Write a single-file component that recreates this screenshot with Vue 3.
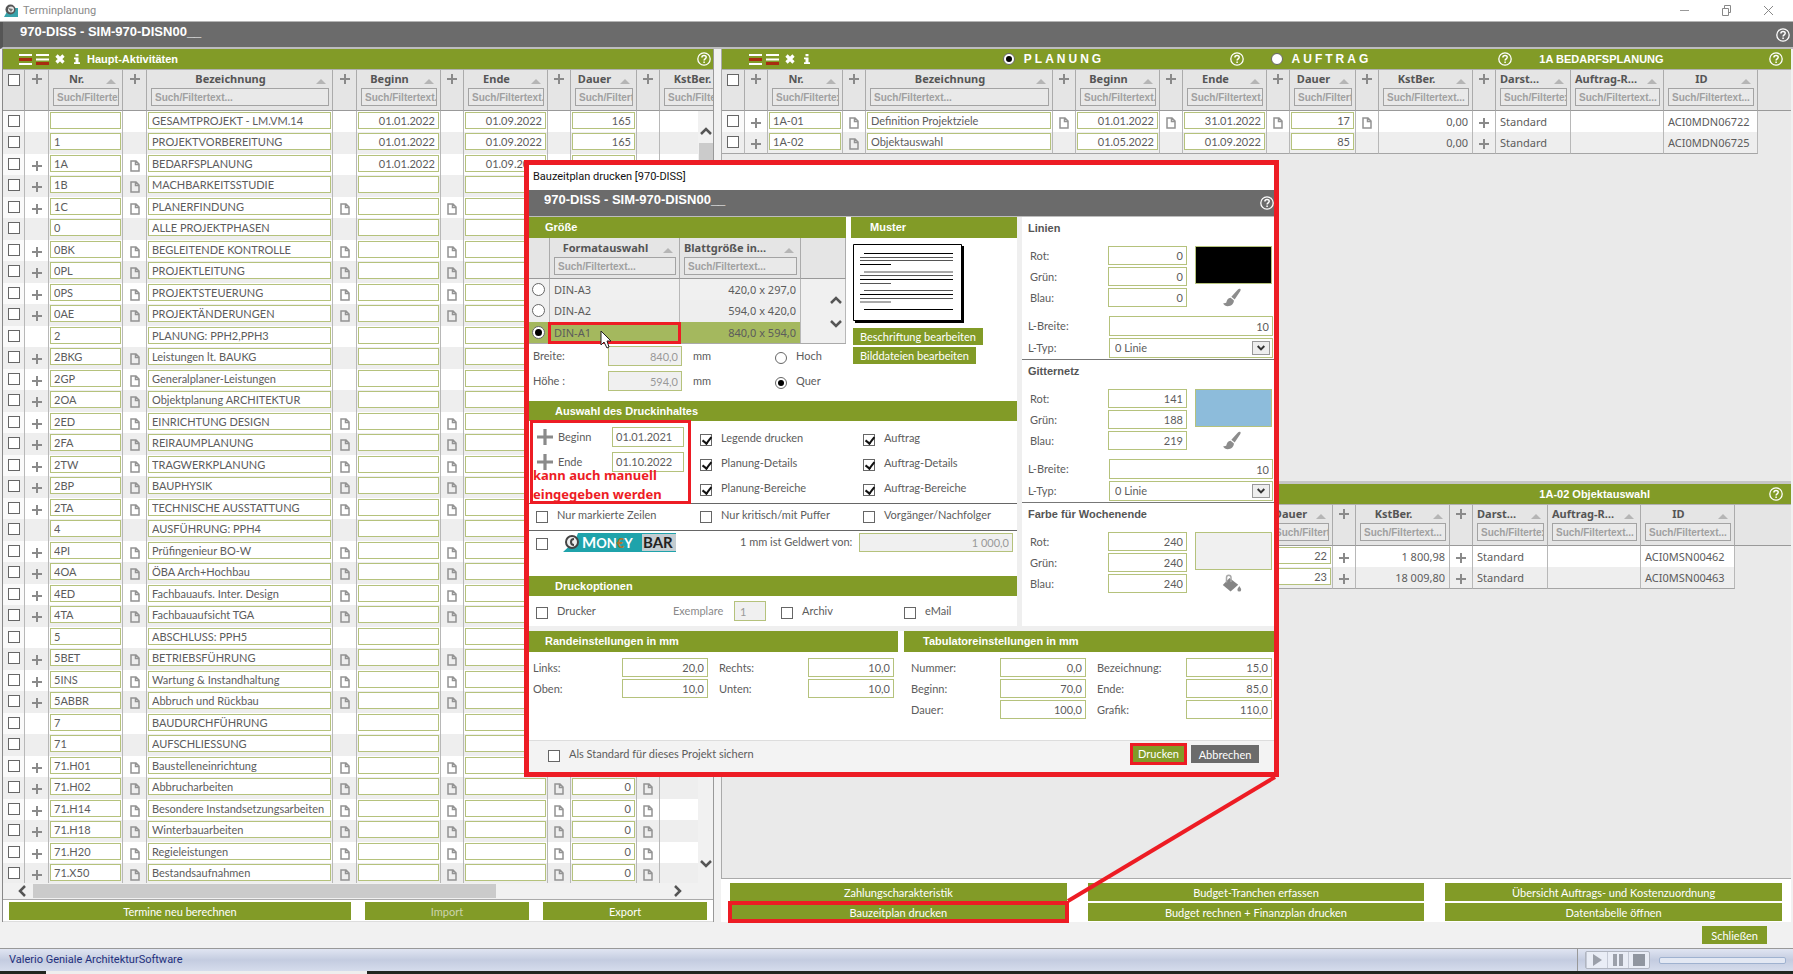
<script setup>
import { ref } from 'vue'

const r = (nr, name, icons = 2, start = '', end = '', days = '') => ({ nr, name, icons, start, end, days })

// icons: 0 = none, 1 = plus and note at the number only, 2 = notes in every column
const activities = ref([
  r('', 'GESAMTPROJEKT - LM.VM.14', 0, '01.01.2022', '01.09.2022', '165'),
  r('1', 'PROJEKTVORBEREITUNG', 0, '01.01.2022', '01.09.2022', '165'),
  r('1A', 'BEDARFSPLANUNG', 1, '01.01.2022', '01.09.2022', '165'),
  r('1B', 'MACHBARKEITSSTUDIE', 1),
  r('1C', 'PLANERFINDUNG'),
  r('0', 'ALLE PROJEKTPHASEN', 0),
  r('0BK', 'BEGLEITENDE KONTROLLE'),
  r('0PL', 'PROJEKTLEITUNG'),
  r('0PS', 'PROJEKTSTEUERUNG'),
  r('0AE', 'PROJEKTÄNDERUNGEN'),
  r('2', 'PLANUNG: PPH2,PPH3', 0),
  r('2BKG', 'Leistungen lt. BAUKG', 1),
  r('2GP', 'Generalplaner-Leistungen', 1),
  r('2OA', 'Objektplanung ARCHITEKTUR', 1),
  r('2ED', 'EINRICHTUNG DESIGN'),
  r('2FA', 'REIRAUMPLANUNG'),
  r('2TW', 'TRAGWERKPLANUNG'),
  r('2BP', 'BAUPHYSIK'),
  r('2TA', 'TECHNISCHE AUSSTATTUNG'),
  r('4', 'AUSFÜHRUNG: PPH4', 0),
  r('4PI', 'Prüfingenieur BO-W'),
  r('4OA', 'ÖBA Arch+Hochbau'),
  r('4ED', 'Fachbauaufs. Inter. Design'),
  r('4TA', 'Fachbauaufsicht TGA'),
  r('5', 'ABSCHLUSS: PPH5', 0),
  r('5BET', 'BETRIEBSFÜHRUNG'),
  r('5INS', 'Wartung & Instandhaltung'),
  r('5ABBR', 'Abbruch und Rückbau'),
  r('7', 'BAUDURCHFÜHRUNG', 0),
  r('71', 'AUFSCHLIESSUNG', 0),
  r('71.H01', 'Baustelleneinrichtung', 2, '', '', '0'),
  r('71.H02', 'Abbrucharbeiten', 2, '', '', '0'),
  r('71.H14', 'Besondere Instandsetzungsarbeiten', 2, '', '', '0'),
  r('71.H18', 'Winterbauarbeiten', 2, '', '', '0'),
  r('71.H20', 'Regieleistungen', 2, '', '', '0'),
  r('71.X50', 'Bestandsaufnahmen', 2, '', '', '0'),
])

const leftCols = [
  { t: 'check', w: 22 }, { t: 'icon', w: 24 },
  { t: 'field', k: 'nr', label: 'Nr.', w: 74 }, { t: 'icon', w: 24 },
  { t: 'field', k: 'name', label: 'Bezeichnung', w: 186 }, { t: 'icon', w: 24 },
  { t: 'field', k: 'start', label: 'Beginn', w: 84, num: true }, { t: 'icon', w: 23 },
  { t: 'field', k: 'end', label: 'Ende', w: 84, num: true }, { t: 'icon', w: 23 },
  { t: 'field', k: 'days', label: 'Dauer', w: 66, num: true }, { t: 'icon', w: 23 },
  { t: 'text', k: 'cost', label: 'KstBer.', w: 84, num: true },
]

const head = [
  { t: 'check', w: 23 }, { t: 'icon', w: 23 },
  { t: 'field', k: 'nr', label: 'Nr.', w: 75 }, { t: 'icon', w: 23 },
  { t: 'field', k: 'name', label: 'Bezeichnung', w: 187 }, { t: 'icon', w: 23 },
  { t: 'field', k: 'start', label: 'Beginn', w: 84, num: true }, { t: 'icon', w: 23 },
  { t: 'field', k: 'end', label: 'Ende', w: 84, num: true },
]
const tail = [
  { t: 'field', k: 'days', label: 'Dauer', w: 66, num: true }, { t: 'icon', w: 23 },
  { t: 'text', k: 'cost', label: 'KstBer.', w: 94, num: true }, { t: 'icon', w: 23 },
  { t: 'text', k: 'view', label: 'Darst…', w: 75, start: true },
  { t: 'text', k: 'order', label: 'Auftrag-R…', w: 93, start: true },
  { t: 'text', k: 'id', label: 'ID', w: 94 },
]
const planCols = [...head, { t: 'icon', w: 23 }, ...tail]
const orderCols = [...head, ...tail]

const planRows = ref([
  { nr: '1A-01', name: 'Definition Projektziele', start: '01.01.2022', end: '31.01.2022', days: '17', cost: '0,00', view: 'Standard', id: 'ACI0MDN06722', marks: ['plus', 'doc', 'doc', 'doc', 'doc', 'doc', 'plus'] },
  { nr: '1A-02', name: 'Objektauswahl', start: '01.05.2022', end: '01.09.2022', days: '85', cost: '0,00', view: 'Standard', id: 'ACI0MDN06725', marks: ['plus', 'doc', '', '', '', '', 'plus'] },
])
const orderRows = ref([
  { nr: '', name: '', start: '', end: '', days: '22', cost: '1 800,98', view: 'Standard', id: 'ACI0MSN00462', marks: ['plus', 'doc', '', '', 'plus', 'plus'] },
  { nr: '', name: '', start: '', end: '', days: '23', cost: '18 009,80', view: 'Standard', id: 'ACI0MSN00463', marks: ['plus', 'doc', '', '', 'plus', 'plus'] },
])
activities.value.forEach((a) => {
  a.marks = a.icons === 2 ? ['plus', 'doc', 'doc', 'doc', 'doc', 'doc'] : a.icons === 1 ? ['plus', 'doc'] : []
})

const slot = (cols, i) => cols.slice(0, i).filter((c) => c.t === 'icon').length

const grids = {
  left: { cols: leftCols, rows: activities.value },
  plan: { cols: planCols, rows: planRows.value },
  order: { cols: orderCols, rows: orderRows.value },
}

const mode = ref('planung')
const format = ref('DIN-A1')
const orientation = ref('quer')
const formats = [
  { name: 'DIN-A3', size: '420,0 x 297,0' },
  { name: 'DIN-A2', size: '594,0 x 420,0' },
  { name: 'DIN-A1', size: '840,0 x 594,0' },
]
const contents = ref([
  { label: 'Legende drucken', on: true }, { label: 'Auftrag', on: true },
  { label: 'Planung-Details', on: true }, { label: 'Auftrag-Details', on: true },
  { label: 'Planung-Bereiche', on: true }, { label: 'Auftrag-Bereiche', on: true },
])
const filters = ['Nur markierte Zeilen', 'Nur kritisch/mit Puffer', 'Vorgänger/Nachfolger']
const colours = [
  { id: 'linien', title: 'Linien', rgb: [0, 0, 0], line: true, icon: 'brush' },
  { id: 'gitter', title: 'Gitternetz', rgb: [141, 188, 219], line: true, icon: 'brush' },
  { id: 'woche', title: 'Farbe für Wochenende', rgb: [240, 240, 240], line: false, icon: 'bucket' },
]
const channels = ['Rot:', 'Grün:', 'Blau:']
const margins = [['Links:', '20,0'], ['Rechts:', '10,0'], ['Oben:', '10,0'], ['Unten:', '10,0']]
const tabs = [['Nummer:', '0,0'], ['Bezeichnung:', '15,0'], ['Beginn:', '70,0'], ['Ende:', '85,0'], ['Dauer:', '100,0'], ['Grafik:', '110,0']]
const actions = ['Zahlungscharakteristik', 'Budget-Tranchen erfassen', 'Übersicht Auftrags- und Kostenzuordnung', 'Bauzeitplan drucken', 'Budget rechnen + Finanzplan drucken', 'Datentabelle öffnen']
</script>

<template>
  <div class="app">
    <svg class="defs" aria-hidden="true">
      <symbol id="i-plus" viewBox="0 0 10 10"><path d="M5 0v10M0 5h10" stroke="#8a8a8a" stroke-width="2" /></symbol>
      <symbol id="i-doc" viewBox="0 0 10 12"><path d="M1 1h5l3 3v7H1zM5.500 1v3.500H9" fill="none" stroke="#939393" stroke-width="1.500" /></symbol>
      <symbol id="i-help" viewBox="0 0 14 14">
        <circle cx="7" cy="7" r="6.200" fill="none" stroke="#fff" stroke-width="1.300" />
        <path d="M4.900 5.500c0-2.700 4.300-2.600 4.300-.2 0 1.500-2.100 1.500-2.100 3.200M7.100 9.600v1.500" fill="none" stroke="#fff" stroke-width="1.500" />
      </symbol>
      <symbol id="i-up" viewBox="0 0 12 8"><path d="M1 7l5-5 5 5" fill="none" stroke="#555" stroke-width="2.500" /></symbol>
      <symbol id="i-insert" viewBox="0 0 13 11"><path d="M0 1h13M0 10h13" stroke="#fff" stroke-width="2" /><path d="M0 5.500h13" stroke="#a82c10" stroke-width="3" /></symbol>
      <symbol id="i-append" viewBox="0 0 13 11"><path d="M0 1h13M0 5.500h13" stroke="#fff" stroke-width="2" /><path d="M0 9.500h13" stroke="#a82c10" stroke-width="3" /></symbol>
      <symbol id="i-remove" viewBox="0 0 10 10"><path d="M1.500 1.500l7 7M8.500 1.500l-7 7" stroke="#fff" stroke-width="3.200" /></symbol>
      <symbol id="i-info" viewBox="0 0 6 10"><path d="M1.500 0h3v2.300h-3zM0 3.600h4.500V8.300H6V10H0V8.300h1.500V5.200H0z" fill="#fff" /></symbol>
      <symbol id="i-brush" viewBox="0 0 20 20">
        <path d="M18.500.8c1 .6.6 1.700.1 2.700L12.800 12 9.300 9.300 16 1.900c.8-.8 1.700-1.500 2.500-1.100zM8.500 10.200l3.400 2.700c.5 3.600-2.900 6.300-6.500 6.200-2 0-3.800-1.300-4.800-2.900l3.300-.6c.6-3 2-5.500 4.600-5.400z" fill="#8c8c8c" />
      </symbol>
      <symbol id="i-bucket" viewBox="0 0 20 18">
        <path d="M7.500 3.500l8.700 6.700-7.600 6.800L.8 10.500z" fill="#858585" />
        <path d="M4.500 8V3c0-3 4.500-3 4.500 0v4.500" fill="none" stroke="#a9a9a9" stroke-width="1.500" />
        <path d="M17.300 11.500c1 1.700 1.900 2.700 1.900 3.700a1.900 1.900 0 0 1-3.800 0c0-1 .9-2 1.900-3.700z" fill="#8c8c8c" />
      </symbol>
    </svg>

    <header class="titlebar">
      <svg class="logo" viewBox="0 0 14 14" aria-hidden="true">
        <path d="M0 13L5 4h9v9z" fill="#38a3ab" /><circle cx="6.500" cy="5.500" r="5" fill="#555" /><circle cx="7" cy="5.500" r="3" fill="#e6e6e6" /><path d="M4 4l5 1-2 3z" fill="#777" />
      </svg>
      <span class="grow">Terminplanung</span>
      <button class="win" aria-label="Minimieren"><svg viewBox="0 0 11 11"><path d="M1 5.500h9" stroke="#999" /></svg></button>
      <button class="win" aria-label="Verkleinern"><svg viewBox="0 0 11 11"><path d="M1.500 3.500h6v7h-6zM3.500 3V.5h6v7H8" fill="none" stroke="#888" /></svg></button>
      <button class="win" aria-label="Schließen"><svg viewBox="0 0 11 11"><path d="M1 1l9 9M10 1l-9 9" stroke="#888" /></svg></button>
    </header>
    <div class="project">
      <h1>970-DISS - SIM-970-DISN00__</h1>
      <button class="help" aria-label="Hilfe"><svg><use href="#i-help" /></svg></button>
    </div>

    <main class="work">
      <section class="panel left">
        <div class="bar tools">
          <button aria-label="Zeile einfügen"><svg class="w13"><use href="#i-insert" /></svg></button>
          <button aria-label="Zeile anhängen"><svg class="w13"><use href="#i-append" /></svg></button>
          <button aria-label="Löschen"><svg class="w10"><use href="#i-remove" /></svg></button>
          <button aria-label="Info"><svg class="w6"><use href="#i-info" /></svg></button>
          <h2 class="grow">Haupt-Aktivitäten</h2>
          <button class="help" aria-label="Hilfe"><svg><use href="#i-help" /></svg></button>
        </div>
        <div class="scroller">
          <table class="grid">
            <colgroup><col v-for="(c, i) in grids.left.cols" :key="i" :style="{ width: c.w + 'px' }" /></colgroup>
            <thead><tr>
              <th v-for="(c, i) in grids.left.cols" :key="i" :class="c.t">
                <input v-if="c.t === 'check'" type="checkbox" aria-label="Alle auswählen" />
                <svg v-else-if="c.t === 'icon'" class="plus"><use href="#i-plus" /></svg>
                <template v-else>
                  <div class="cap"><span>{{ c.label }}</span><i></i></div>
                  <input class="filter" placeholder="Such/Filtertext..." :aria-label="c.label + ' filtern'" />
                </template>
              </th>
            </tr></thead>
            <tbody>
              <tr v-for="(row, n) in grids.left.rows" :key="n">
                <td v-for="(c, i) in grids.left.cols" :key="i" :class="[c.t, { num: c.num }]">
                  <input v-if="c.t === 'check'" type="checkbox" :aria-label="'Zeile ' + row.nr" />
                  <svg v-else-if="c.t === 'icon' && row.marks[slot(grids.left.cols, i)]" :class="row.marks[slot(grids.left.cols, i)]"><use :href="'#i-' + row.marks[slot(grids.left.cols, i)]" /></svg>
                  <input v-else-if="c.t === 'field'" v-model="row[c.k]" class="box" :aria-label="c.label" />
                </td>
              </tr>
            </tbody>
          </table>
          <div class="vscroll">
            <svg class="arrow"><use href="#i-up" /></svg>
            <div class="thumb"></div>
            <svg class="arrow down"><use href="#i-up" /></svg>
          </div>
        </div>
        <div class="hscroll">
          <svg class="arrow west"><use href="#i-up" /></svg>
          <div class="track"><div class="thumb"></div></div>
          <svg class="arrow east"><use href="#i-up" /></svg>
        </div>
        <div class="leftbuttons">
          <button class="btn">Termine neu berechnen</button>
          <button class="btn" disabled>Import</button>
          <button class="btn">Export</button>
        </div>
      </section>

      <section class="panel right">
        <div v-for="key in ['plan', 'order']" :key="key" class="half" :class="key">
          <div v-if="key === 'plan'" class="bar modes">
            <div class="tools">
              <button aria-label="Zeile einfügen"><svg class="w13"><use href="#i-insert" /></svg></button>
              <button aria-label="Zeile anhängen"><svg class="w13"><use href="#i-append" /></svg></button>
              <button aria-label="Löschen"><svg class="w10"><use href="#i-remove" /></svg></button>
              <button aria-label="Info"><svg class="w6"><use href="#i-info" /></svg></button>
            </div>
            <label class="mode"><input v-model="mode" type="radio" name="mode" value="planung" />PLANUNG</label>
            <button class="help" aria-label="Hilfe Planung"><svg><use href="#i-help" /></svg></button>
            <label class="mode"><input v-model="mode" type="radio" name="mode" value="auftrag" />AUFTRAG</label>
            <button class="help" aria-label="Hilfe Auftrag"><svg><use href="#i-help" /></svg></button>
            <h2>1A BEDARFSPLANUNG</h2>
            <button class="help" aria-label="Hilfe"><svg><use href="#i-help" /></svg></button>
          </div>
          <div v-else class="bar modes">
            <span class="fill"></span>
            <h2>1A-02 Objektauswahl</h2>
            <button class="help" aria-label="Hilfe"><svg><use href="#i-help" /></svg></button>
          </div>
          <table class="grid full">
            <colgroup><col v-for="(c, i) in grids[key].cols" :key="i" :style="{ width: c.w + 'px' }" /><col /></colgroup>
            <thead><tr>
              <th v-for="(c, i) in grids[key].cols" :key="i" :class="[c.t, { start: c.start }]">
                <input v-if="c.t === 'check'" type="checkbox" aria-label="Alle auswählen" />
                <svg v-else-if="c.t === 'icon'" class="plus"><use href="#i-plus" /></svg>
                <template v-else>
                  <div class="cap"><span>{{ c.label }}</span><i></i></div>
                  <input class="filter" placeholder="Such/Filtertext..." :aria-label="c.label + ' filtern'" />
                </template>
              </th>
              <th class="rest"></th>
            </tr></thead>
            <tbody>
              <tr v-for="(row, n) in grids[key].rows" :key="n">
                <td v-for="(c, i) in grids[key].cols" :key="i" :class="[c.t, { num: c.num }]">
                  <input v-if="c.t === 'check'" type="checkbox" :aria-label="'Zeile ' + row.nr" />
                  <svg v-else-if="c.t === 'icon' && row.marks[slot(grids[key].cols, i)]" :class="row.marks[slot(grids[key].cols, i)]"><use :href="'#i-' + row.marks[slot(grids[key].cols, i)]" /></svg>
                  <input v-else-if="c.t === 'field'" v-model="row[c.k]" class="box" :aria-label="c.label" />
                  <template v-else-if="c.t === 'text'">{{ row[c.k] }}</template>
                </td>
                <td class="rest"></td>
              </tr>
            </tbody>
          </table>
        </div>
        <div class="actions">
          <button v-for="a in actions" :key="a" class="btn" :class="{ marked: a === 'Bauzeitplan drucken' }">{{ a }}</button>
        </div>
      </section>
    </main>

    <div class="closing"><button class="btn">Schließen</button></div>
    <footer class="status">
      <span class="grow">Valerio Geniale ArchitekturSoftware</span>
      <div class="player">
        <div class="keys">
          <button aria-label="Start"><svg viewBox="0 0 14 14"><path d="M3 1v12l9-6z" fill="#9ba0aa" /></svg></button>
          <button aria-label="Pause"><svg viewBox="0 0 14 14"><path d="M2 1h4v12H2zM8 1h4v12H8z" fill="#9ba0aa" /></svg></button>
          <button aria-label="Stopp"><svg viewBox="0 0 14 14"><path d="M1 1h12v12H1z" fill="#9096a0" /></svg></button>
        </div>
        <div class="progress"></div>
      </div>
    </footer>
    <div class="taskbar"><i></i></div>

    <svg class="connector" aria-hidden="true"><path d="M208 1L1 125" stroke="#ed1c24" stroke-width="4" /></svg>

    <div class="dialog" role="dialog" aria-label="Bauzeitplan drucken">
      <div class="dtitle">Bauzeitplan drucken [970-DISS]</div>
      <div class="project dproject">
        <h2>970-DISS - SIM-970-DISN00__</h2>
        <button class="help" aria-label="Hilfe"><svg><use href="#i-help" /></svg></button>
      </div>
      <div class="dmain">
        <div class="dleft">
          <div class="dtop">
            <div class="size">
              <h3 class="dbar near">Größe</h3>
              <table class="grid formats">
                <colgroup><col class="f1" /><col class="f2" /><col class="f3" /><col /></colgroup>
                <thead><tr>
                  <th></th>
                  <th><div class="cap"><span>Formatauswahl</span><i></i></div><input class="filter" placeholder="Such/Filtertext..." aria-label="Format filtern" /></th>
                  <th class="start"><div class="cap"><span>Blattgröße in…</span><i></i></div><input class="filter" placeholder="Such/Filtertext..." aria-label="Blattgröße filtern" /></th>
                  <th></th>
                </tr></thead>
                <tbody>
                  <tr v-for="(f, n) in formats" :key="f.name" :class="{ sel: f.name === format }">
                    <td class="pick"><input :id="f.name" v-model="format" type="radio" name="format" :value="f.name" /></td>
                    <td><label :for="f.name" :class="{ ring: f.name === format }">{{ f.name }}</label></td>
                    <td class="num">{{ f.size }}</td>
                    <td v-if="n === 0" rowspan="3" class="arrows"><svg class="arrow"><use href="#i-up" /></svg><svg class="arrow down"><use href="#i-up" /></svg></td>
                  </tr>
                </tbody>
              </table>
              <div class="dims">
                <label for="breite">Breite:</label><input id="breite" class="box num off" value="840,0" disabled /><span>mm</span>
                <label class="orient"><input v-model="orientation" type="radio" name="orient" value="hoch" />Hoch</label>
                <label for="hoehe">Höhe :</label><input id="hoehe" class="box num off" value="594,0" disabled /><span>mm</span>
                <label class="orient"><input v-model="orientation" type="radio" name="orient" value="quer" />Quer</label>
              </div>
            </div>
            <div class="sample">
              <h3 class="dbar near">Muster</h3>
              <svg class="page" viewBox="0 0 111 79" role="img" aria-label="Muster">
                <path d="M2 2h109v77H2z" /><path d="M.5.5h108v76H.5z" fill="#fff" stroke="#000" />
                <path d="M11 9.500h89M7 20.500h31M7 35.500h93M7 50.500h93M11 65.500h89" stroke="#000" />
                <path d="M7 13.500h93M7 16.500h93M11 28h89M7 31.500h93M7 39.500h31M11 46.500h89M7 54.500h93M7 58h31" stroke="#555" />
              </svg>
              <button class="btn small">Beschriftung bearbeiten</button>
              <button class="btn small">Bilddateien bearbeiten</button>
            </div>
          </div>

          <h3 class="dbar">Auswahl des Druckinhaltes</h3>
          <div class="choice">
            <div class="period">
              <svg class="bigplus"><use href="#i-plus" /></svg><label for="von">Beginn</label><input id="von" class="box" value="01.01.2021" />
              <svg class="bigplus"><use href="#i-plus" /></svg><label for="bis">Ende</label><input id="bis" class="box" value="01.10.2022" />
              <p class="hint">kann auch manuell eingegeben werden</p>
            </div>
            <div class="checks">
              <label v-for="c in contents" :key="c.label" class="check"><input v-model="c.on" type="checkbox" />{{ c.label }}</label>
            </div>
          </div>
          <div class="filters">
            <label v-for="f in filters" :key="f" class="check"><input type="checkbox" />{{ f }}</label>
          </div>
          <div class="money">
            <input type="checkbox" aria-label="MoneyBar" />
            <svg class="moneybar" viewBox="0 0 113 19" role="img" aria-label="MoneyBar">
              <path d="M0 19L12 8 15 0h98v19z" fill="#1fa3ab" /><path d="M79 1h34v17H79z" fill="#c3cdd2" />
              <circle cx="9" cy="9" r="6" fill="#eee" stroke="#444" stroke-width="2" /><path d="M11 6a3 3 0 1 0 0 6" fill="none" stroke="#444" stroke-width="2" />
              <text x="19" y="15" class="m1">M<tspan class="m2">ON</tspan><tspan class="m3">€</tspan><tspan class="m2">Y</tspan></text>
              <text x="80" y="15" class="m4">BAR</text>
            </svg>
            <label for="wert">1 mm ist Geldwert von:</label>
            <input id="wert" class="box num off" value="1 000,0" disabled />
          </div>
          <h3 class="dbar">Druckoptionen</h3>
          <div class="options">
            <label class="check"><input type="checkbox" />Drucker</label>
            <label for="anzahl" class="dim">Exemplare</label><input id="anzahl" class="box off" value="1" disabled />
            <label class="check"><input type="checkbox" />Archiv</label>
            <label class="check"><input type="checkbox" />eMail</label>
          </div>
        </div>

        <div class="dright">
          <section v-for="c in colours" :key="c.id" class="colour">
            <h3>{{ c.title }}</h3>
            <div class="rgb">
              <template v-for="(ch, i) in channels" :key="ch">
                <label :for="c.id + i">{{ ch }}</label><input :id="c.id + i" class="box num" :value="c.rgb[i]" />
              </template>
              <div class="swatch" :style="{ background: 'rgb(' + c.rgb.join() + ')' }"></div>
              <button class="tool" aria-label="Farbe wählen"><svg><use :href="'#i-' + c.icon" /></svg></button>
            </div>
            <div v-if="c.line" class="line">
              <label :for="c.id + 'b'">L-Breite:</label><input :id="c.id + 'b'" class="box num" value="10" />
              <label :for="c.id + 't'">L-Typ:</label>
              <div class="select"><select :id="c.id + 't'" class="box"><option>0 Linie</option></select><span><svg class="arrow down" viewBox="0 0 12 8"><path d="M1 7l5-5 5 5" fill="none" stroke="#333" stroke-width="3" /></svg></span></div>
            </div>
          </section>
        </div>
      </div>

      <div class="settings">
        <section>
          <h3 class="dbar near">Randeinstellungen in mm</h3>
          <div class="pairs rand">
            <template v-for="m in margins" :key="m[0]"><label :for="m[0]">{{ m[0] }}</label><input :id="m[0]" class="box num" :value="m[1]" /></template>
          </div>
        </section>
        <section>
          <h3 class="dbar near wide">Tabulatoreinstellungen in mm</h3>
          <div class="pairs tabu">
            <template v-for="m in tabs" :key="m[0]"><label :for="'t' + m[0]">{{ m[0] }}</label><input :id="'t' + m[0]" class="box num" :value="m[1]" /></template>
          </div>
        </section>
      </div>
      <div class="dfoot">
        <label class="check grow"><input type="checkbox" />Als Standard für dieses Projekt sichern</label>
        <button class="btn print">Drucken</button>
        <button class="btn cancel">Abbrechen</button>
      </div>
      <svg class="cursor" viewBox="0 0 12 19" aria-hidden="true"><path d="M1 1v14l3-3 3 6 2-1-2-6h4z" fill="#fff" stroke="#222" /></svg>
    </div>
  </div>
</template>

<style>
body { margin: 0; background: #f1f1f1; overflow: hidden; }
</style>

<style scoped>
* { box-sizing: border-box; }
.app { position: relative; height: 100vh; display: flex; flex-direction: column; background: #f1f1f1; overflow: hidden; color: #5c5c5c; font: 11px/14px Lato, "Liberation Sans", sans-serif; }
h1, h2, h3, p { margin: 0; }
button { padding: 0; border: 0; background: none; font: inherit; color: inherit; display: block; flex: none; }
button svg { display: block; }
input, select { font: inherit; color: inherit; margin: 0; }
.grow { flex: 1; }
.defs { position: absolute; width: 0; height: 0; }

.titlebar { height: 22px; flex: none; background: #fff; display: flex; align-items: center; padding: 0 19px 0 4px; color: #8a8a8a; font: 11px/16px Roboto, sans-serif; border-bottom: 1px solid #b5b5b5; }
.logo { width: 14px; height: 14px; margin-right: 5px; }
.win { width: 11px; height: 11px; margin-left: 31px; }
.win svg { width: 11px; height: 11px; }
.project { height: 27px; flex: none; display: flex; align-items: flex-start; justify-content: space-between; background: #6b6b6b; border-bottom: 2px solid #bdbdbd; border-left: 3px solid #555; padding: 2px 3px 0 17px; color: #fff; }
.project h1, .project h2 { font: bold 13px/16px "Liberation Sans", sans-serif; }
.project .help { margin-top: 4px; }
.help, .help svg { width: 14px; height: 14px; }

.work { flex: 1; min-height: 0; display: grid; grid-template-columns: 712fr 1070fr; gap: 7px; padding: 0 2px 0 2px; background: #f1f1f1; }
.panel { display: flex; flex-direction: column; min-width: 0; min-height: 0; }
.left { border-left: 1px solid #888; border-right: 1px solid #999; background: #fff; }
.bar { height: 21px; flex: none; background: #829b27; color: #fff; display: flex; align-items: center; }
.bar h2 { font: bold 11px/14px "Liberation Sans", sans-serif; }
.left .bar { height: 20px; }
.tools { display: flex; align-items: center; gap: 4px; padding-left: 16px; }
.tools .w10 { width: 10px; height: 10px; margin: 0 3px 0 2px; }
.tools .w6 { width: 6px; height: 10px; margin: 0 3px 0 2px; }
.tools .w13 { width: 13px; height: 11px; }
.left .help { margin-right: 2px; }

.scroller { flex: 1; min-height: 0; overflow: hidden; position: relative; }
.grid { border-collapse: separate; border-spacing: 0; table-layout: fixed; width: 100%; }
.left .grid { width: 741px; }
.grid th { height: 42px; padding: 0 3px 0 4px; vertical-align: top; background: #e5e5e5; border-right: 1px solid #ababab; border-top: 1px solid #b0b0b0; border-bottom: 1px solid #999; color: #555; text-align: left; }
.cap { display: flex; align-items: center; height: 18px; padding-right: 3px; font: bold 11px/16px "Noto Sans", sans-serif; white-space: nowrap; }
.cap span { flex: 1; text-align: center; padding-right: 6px; }
.start .cap span { text-align: left; padding: 0; }
.cap i { border: 5px solid transparent; border-top: 0; border-bottom: 5px solid #b5b5b5; margin-top: 4px; }
.filter { display: block; width: 100%; height: 18px; border: 1px solid #a3a3a3; background: #e9e9e9; padding: 0 0 0 3px; font-family: "Liberation Sans", sans-serif; font-size: 10px; border-radius: 0; outline: 0; }
.filter::placeholder { color: #a0a0a0; opacity: 1; }
.grid th.check, .grid td.check, .grid th.icon, .grid td.icon { padding: 0; text-align: center; }
.grid td.check { background: #fafafa; }
.grid th.check input, .grid td.check input { margin: 4px auto 0; }
svg.plus { width: 10px; height: 10px; display: block; margin: 4px auto 0; }
td svg.plus { margin-top: 7px; }
td svg.doc { width: 10px; height: 12px; display: block; margin: 6px auto 0; }
.grid td { height: 21px; padding: 1px 1px 0 1px; vertical-align: top; background: #fff; border-right: 1px solid #b8b8b8; }
.grid tr:nth-child(even) td { height: 22px; background: #eee; }
.grid td.text { font: 11px/19px "Noto Sans", sans-serif; padding: 1px 4px 0; }
.num { text-align: right; }
td.num .box { text-align: right; }
.right tbody tr:last-child td { border-bottom: 1px solid #a5a5a5; }
.right .grid .rest { background: #e5e5e5; border-right: 0; }
.right .grid tbody tr td.rest { background: #eaeaea; border: 0; }
.box { display: block; width: 100%; height: 17px; border: 1px solid #b5c27c; background: #fff; padding: 0 3px; border-radius: 0; outline: 0; min-width: 0; }
.off { background: #f0f0f0; color: #999; }

input[type="checkbox"], input[type="radio"] { appearance: none; display: block; width: 12px; height: 12px; border: 1px solid #666; background: #fff; flex: none; position: relative; }
input[type="radio"] { border-radius: 50%; }
input[type="checkbox"]:checked::before { content: ""; position: absolute; left: 3px; top: 0; width: 4px; height: 7px; border: solid #111; border-width: 0 2px 2px 0; transform: rotate(38deg); }
input[type="radio"]:checked::before { content: ""; position: absolute; inset: 2px; border-radius: 50%; background: #000; }

.arrow { width: 12px; height: 8px; display: block; }
.down { transform: rotate(180deg); }
.west { transform: rotate(-90deg); }
.east { transform: rotate(90deg); }
.vscroll { position: absolute; right: 0; top: 42px; bottom: 0; width: 15px; background: #f1f1f1; display: flex; flex-direction: column; align-items: center; padding: 16px 0 15px; }
.vscroll .thumb { width: 14px; height: 90px; background: #cbcbcb; margin: 8px 0 auto; }
.hscroll { height: 17px; flex: none; display: flex; align-items: center; background: #f1f1f1; border-bottom: 1px solid #aaa; padding: 0 29px 0 13px; }
.track { flex: 1; margin: 0 5px; }
.hscroll .thumb { width: 73%; height: 14px; background: #cbcbcb; }
.leftbuttons { flex: none; height: 22px; display: grid; grid-template-columns: 342fr 164fr 164fr; gap: 14px; padding: 2px 6px; background: #fff; border-bottom: 1px solid #ddd; }
.btn { background: #829b27; color: #fff; text-align: center; height: 18px; line-height: 17px; white-space: nowrap; }
.btn:disabled { color: #cdd5ae; }

.half { background: #eaeaea; min-height: 0; overflow: hidden; border-left: 1px solid #aaa; }
.plan { flex: 434; }
.order { flex: 395; border-top: 3px solid #c6c6c6; }
.right .bar { height: 20px; }
.modes { display: grid; grid-template-columns: 280fr 227fr 40fr 227fr 41fr 229fr 22px; width: 100%; }
.modes .tools { padding-left: 27px; }
.modes .fill { grid-column: 1 / 6; }
.mode { display: flex; align-items: center; gap: 9px; font: bold 12px/16px "Liberation Sans", sans-serif; letter-spacing: 3px; }
.actions { flex: none; height: 44px; display: grid; grid-template-columns: repeat(3, 1fr); gap: 2px 21px; padding: 4px 9px 1px 9px; border-top: 1px solid #aaa; background: #fff; }
.marked { outline: 4px solid #ed1c24; outline-offset: -2px; position: relative; }

.closing { flex: none; height: 26px; display: flex; justify-content: flex-end; padding: 4px 26px 0 0; }
.closing .btn { padding: 0 9px; }
.status { flex: none; height: 23px; display: flex; align-items: center; padding: 0 7px 0 9px; border-top: 1px solid #999; background: linear-gradient(#e0e5f2, #c4cce0 50%, #d5dcec); color: #1f2f7c; font: 11px/14px Roboto, sans-serif; }
.player { display: flex; align-items: center; gap: 9px; border-left: 1px solid #999; padding-left: 7px; height: 22px; width: 209px; }
.keys { display: flex; border: 1px solid #b0b5c0; background: #e9edf6; border-radius: 2px; }
.keys button { width: 21px; height: 16px; padding: 1px 3px; border-left: 1px solid #c5cad6; }
.keys svg { width: 14px; height: 14px; }
.progress { flex: 1; height: 7px; border: 1px solid #9fb2d0; background: #e3e8f3; border-radius: 2px; }
.taskbar { flex: none; height: 3px; background: #20261f; padding-left: 46px; }
.taskbar i { display: block; width: 321px; height: 3px; background: #eee; }

.connector { position: absolute; left: 1067px; top: 776px; width: 211px; height: 128px; }

.dialog { position: absolute; left: 524px; top: 160px; width: 755px; border: 5px solid #ed1c24; background: #fff; }
.dtitle { height: 25px; padding: 4px; color: #111; font: 11px/16px Roboto, sans-serif; }
.dproject { border-left: 0; border-bottom: 1px solid #bdbdbd; padding: 2px 0 0 15px; }
.dmain { display: grid; grid-template-columns: minmax(0, 1fr) 252px; gap: 5px; background: #efefef; border-bottom: 5px solid #efefef; }
.dleft, .dright { background: #fff; }
.dbar { background: #829b27; color: #fff; height: 20px; font: bold 11px/20px "Liberation Sans", sans-serif; padding-left: 26px; }
.dbar.near { height: 21px; padding-left: 16px; }
.dtop { display: grid; grid-template-columns: 317px 1fr; gap: 5px; height: 184px; }
.sample .dbar.near, .dbar.near.wide { padding-left: 19px; }
.f1 { width: 21px; }
.f2 { width: 130px; }
.f3 { width: 121px; }
.formats { border-bottom: 1px solid #aaa; }
.formats th { height: 41px; border-top: 0; padding-top: 1px; }
.grid.formats td { height: 21px; font: 11px/20px "Noto Sans", sans-serif; padding: 1px 4px 0; background: #fff; }
.grid.formats tr:nth-child(odd) td { background: #f0f0f0; }
.grid.formats tr.sel td { background: #a4b85e; }
.grid.formats td.pick { padding: 4px 0 0 3px; }
.grid.formats td.pick input { width: 13px; height: 13px; }
.grid.formats td.arrows { background: #f0f0f0; padding: 17px 0 0 29px; }
.arrows .down { margin-top: 16px; }
.formats label { display: block; }
.formats .ring { margin: -1px -6px -2px; padding: 0 3px; border: 3px solid #ed1c24; height: 22px; line-height: 16px; position: relative; }
.dims { display: grid; grid-template-columns: 75px 74px 82px 1fr; gap: 5px 0; padding: 2px 0 0 4px; align-items: center; }
.dims > span { padding-left: 11px; }
.dims .box { height: 20px; }
.orient { display: flex; gap: 9px; align-items: center; padding-left: 11px; }
.orient input { top: 2px; }
.page { display: block; width: 111px; height: 79px; margin: 6px 0 5px 2px; }
.small { height: 17px; padding: 0 7px; margin: 0 0 2px 2px; }
.choice { display: grid; grid-template-columns: 171px 1fr; height: 83px; border-bottom: 1px solid #666; }
.period { display: grid; grid-template-columns: 21px 54px 72px; grid-template-rows: 19px 19px auto; row-gap: 6px; width: 161px; height: 84px; margin: -1px 0 0 1px; border: 3px solid #ed1c24; padding: 4px 0 0 4px; align-items: center; position: relative; }
.bigplus { width: 16px; height: 16px; }
.period .box { height: 20px; }
.hint { grid-column: 1 / -1; color: #ed1c24; font: bold 13px/19px "Noto Sans", sans-serif; margin: -11px 0 0 -4px; position: relative; }
.checks { display: grid; grid-template-columns: 163px 1fr; grid-auto-rows: 25px; padding-top: 4px; }
label.check { display: flex; align-items: center; gap: 9px; flex: none; }
label.check input { top: 2px; }
.filters { display: grid; grid-template-columns: 164px 163px 1fr; height: 27px; padding-left: 7px; border-bottom: 1px solid #666; align-items: center; padding-bottom: 4px; }
.money { display: flex; align-items: flex-start; height: 45px; padding: 2px 4px 0 7px; }
.money > input[type="checkbox"] { top: 5px; }
.moneybar { width: 113px; height: 19px; margin: 0 64px 0 15px; flex: none; }
.moneybar text { font-family: Lato, sans-serif; font-weight: bold; fill: #fff; }
.m1 { font-size: 15px; }
.m2 { font-size: 13px; }
.moneybar .m3 { font-size: 13px; fill: #b0752c; }
.moneybar .m4 { font-size: 15px; fill: #222; }
.money label { flex: 1; line-height: 18px; white-space: nowrap; }
.money .box { width: 154px; height: 19px; text-align: right; }
.options { display: flex; align-items: center; height: 30px; padding-left: 7px; }
.options .check { width: 123px; }
.options .check:first-child { width: 137px; }
.options .check:last-child { width: 80px; }
.options .dim { width: 61px; flex: none; color: #8a8a8a; }
.options .box { width: 32px; flex: none; height: 20px; margin-right: 15px; padding-left: 5px; }

.colour h3 { font: bold 11px/22px "Liberation Sans", sans-serif; height: 29px; color: #555; }
.colour { padding-left: 6px; }
.colour:not(:last-child) { border-bottom: 1px solid #777; }
.rgb { display: grid; grid-template-columns: 80px 79px 8px 77px; grid-template-rows: repeat(3, 19px); gap: 2px 0; align-items: center; }
.rgb label { grid-column: 1; padding-left: 2px; }
.rgb .box { grid-column: 2; height: 19px; }
.swatch { grid-column: 4; grid-row: 1 / 3; height: 38px; align-self: start; border: 1px solid #b5c27c; }
.tool { grid-column: 4; grid-row: 3; justify-self: start; padding-left: 27px; }
.tool svg { width: 20px; height: 19px; }
.line { display: grid; grid-template-columns: 81px 164px; grid-auto-rows: 20px; gap: 2px 0; margin: 9px 0 1px; align-items: center; }
.line .box { height: 20px; }
.select { position: relative; }
.select select { appearance: none; padding-left: 5px; }
.select span { position: absolute; right: 3px; top: 3px; width: 18px; height: 14px; border: 1px solid #999; background: #eee; pointer-events: none; padding: 3px 4px; }
.select svg { width: 8px; height: 6px; }

.settings { display: grid; grid-template-columns: 369px 1fr; gap: 6px; height: 109px; }
.pairs { display: grid; grid-auto-rows: 19px; gap: 2px 0; padding-top: 6px; align-items: center; }
.pairs .box { height: 19px; }
.rand { grid-template-columns: 89px 86px 100px 86px; padding-left: 4px; }
.tabu { grid-template-columns: 89px 86px 100px 86px; padding-left: 7px; }
.pairs label:nth-of-type(even) { padding-left: 11px; }
.dfoot { height: 32px; display: flex; align-items: flex-start; background: #f3f3f3; border-top: 1px solid #ddd; padding: 2px 15px 0 19px; }
.dfoot .check { flex: 1; height: 22px; }
.print { width: 57px; height: 22px; border: 3px solid #ed1c24; line-height: 14px; margin-right: 4px; }
.cancel { width: 68px; background: #6b6b6b; margin-top: 2px; }
.cursor { position: absolute; left: 71px; top: 165px; width: 12px; height: 19px; }
</style>
